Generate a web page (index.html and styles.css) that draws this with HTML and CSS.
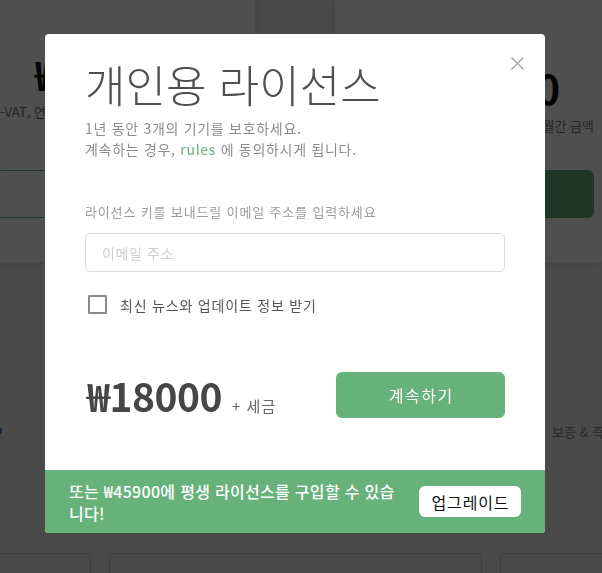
FILE: index.html
```html
<!DOCTYPE html>
<html lang="ko">
<head>
<meta charset="utf-8">
<title>개인용 라이선스</title>
<link rel="stylesheet" href="styles.css">
</head>
<body>
<div class="page">
  <section class="plans">
    <div class="plan plan-left">
      <div class="plan-price">₩18000</div>
      <div class="plan-note">-VAT, 연간 결제</div>
      <div class="plan-btn plan-btn-outline">선택하기</div>
    </div>
    <div class="plan plan-right">
      <div class="plan-price">₩2500</div>
      <div class="plan-note">VAT 별도, 월간 금액</div>
      <div class="plan-btn plan-btn-fill">선택하기</div>
    </div>
  </section>
  <section class="features">
    <div class="feature-row">
      <span class="feature-dot"></span>
      <span class="feature-text">보증 &amp; 즉시 지원</span>
    </div>
    <div class="cards">
      <div class="card card-a"></div>
      <div class="card card-b"></div>
      <div class="card card-c"></div>
    </div>
  </section>
</div>

<div class="overlay">
  <div class="modal">
    <div class="modal-body">
      <button class="close" aria-label="닫기">
        <svg width="13" height="13" viewBox="0 0 13 13"><path d="M0.5 0.5L12.5 12.5M12.5 0.5L0.5 12.5" stroke="#9a9a9a" stroke-width="1.1" fill="none"/></svg>
      </button>
      <h1 class="title">개인용 라이선스</h1>
      <p class="subtitle">1년 동안 3개의 기기를 보호하세요.<br>계속하는 경우, <a class="rules">rules</a> 에 동의하시게 됩니다.</p>
      <div class="label">라이선스 키를 보내드릴 이메일 주소를 입력하세요</div>
      <div class="input">이메일 주소</div>
      <label class="check-row">
        <span class="check-box"></span>
        <span class="check-label">최신 뉴스와 업데이트 정보 받기</span>
      </label>
      <div class="price-row">
        <div class="price"><span class="price-num">₩18000</span><span class="price-tax">+ 세금</span></div>
        <div class="continue">계속하기</div>
      </div>
    </div>
    <div class="modal-foot">
      <div class="foot-text">또는 ₩45900에 평생 라이선스를 구입할 수 있습니다!</div>
      <div class="upgrade">업그레이드</div>
    </div>
  </div>
</div>
</body>
</html>
```

FILE: styles.css
```css
html, body {
  margin: 0;
  padding: 0;
}
body {
  width: 602px;
  height: 573px;
  overflow: hidden;
  font-family: "Noto Sans CJK KR", "Noto Sans", sans-serif;
  background: #efefef;
}
.page {
  width: 602px;
  height: 573px;
  overflow: hidden;
  background: #efefef;
}

/* background plans */
.plans {
  display: flex;
  gap: 80px;
  margin-left: -12px;
  height: 262px;
}
.plan {
  flex: 0 0 267px;
  box-sizing: border-box;
  background: #fff;
  box-shadow: 0 0 10px rgba(0, 0, 0, 0.12);
  padding: 0 8px;
  display: flex;
  flex-direction: column;
}
.plan-price {
  font-size: 40px;
  font-weight: 700;
  line-height: 48px;
  color: #111;
  white-space: nowrap;
}
.plan-note {
  font-size: 13px;
  line-height: 18px;
  color: #777;
  white-space: nowrap;
  margin-top: 5px;
}
.plan-btn {
  box-sizing: border-box;
  height: 48px;
  border-radius: 6px;
  font-size: 15px;
  display: flex;
  align-items: center;
  justify-content: center;
}
.plan-left {
  padding-top: 50px;
  align-items: flex-start;
}
.plan-left .plan-price {
  margin-left: 39px;
}
.plan-left .plan-note {
  margin-left: 4px;
}
.plan-left .plan-btn {
  margin-top: 49px;
  align-self: stretch;
}
.plan-btn-outline {
  border: 1px solid #66b27a;
  color: #66b27a;
}
.plan-right {
  padding-top: 64px;
  align-items: flex-end;
}
.plan-right .plan-price {
  margin-right: 34px;
}
.plan-right .plan-btn {
  margin-top: 35px;
  align-self: stretch;
}
.plan-btn-fill {
  background: #66b27a;
  color: #fff;
}

.features {
  padding-top: 160px;
}
.feature-row {
  display: flex;
  justify-content: space-between;
  align-items: center;
  height: 18px;
}
.feature-dot {
  width: 8px;
  height: 8px;
  border-radius: 50%;
  background: #2f7fd0;
  margin-left: -6px;
}
.feature-text {
  font-size: 13px;
  color: #888;
  white-space: nowrap;
  width: 50px;
  overflow: visible;
}
.cards {
  display: flex;
  gap: 18px;
  margin-top: 113px;
  margin-left: -40px;
}
.card {
  height: 100px;
  border: 1px solid #cbcbcb;
  border-radius: 5px;
  box-sizing: border-box;
}
.card-a { flex: 0 0 131px; }
.card-b { flex: 0 0 373px; }
.card-c { flex: 0 0 200px; }

/* overlay + modal */
.overlay {
  position: fixed;
  inset: 0;
  background: rgba(0, 0, 0, 0.69);
}
.modal {
  width: 500px;
  margin: 34px 0 0 45px;
  border-radius: 4px;
  overflow: hidden;
  background: #fff;
}
.modal-body {
  position: relative;
  height: 436px;
  box-sizing: border-box;
  padding: 23px 40px 0;
}
.close {
  position: absolute;
  top: 23px;
  right: 21px;
  width: 13px;
  height: 13px;
  padding: 0;
  border: 0;
  background: none;
  display: block;
}
.close svg {
  display: block;
}
.title {
  margin: 0;
  font-size: 44px;
  font-weight: 300;
  line-height: 55px;
  color: #4f4f4f;
  white-space: nowrap;
}
.subtitle {
  margin: 6px 0 0;
  font-size: 14px;
  line-height: 21px;
  letter-spacing: 0.7px;
  color: #8d8d8d;
}
.rules {
  color: #66b27a;
}
.label {
  margin-top: 43px;
  font-size: 13px;
  line-height: 18px;
  letter-spacing: 0.85px;
  color: #9a9a9a;
}
.input {
  margin-top: 12px;
  box-sizing: border-box;
  height: 39px;
  border: 1px solid #dcdcdc;
  border-radius: 5px;
  padding-left: 16px;
  display: flex;
  align-items: center;
  font-size: 14px;
  letter-spacing: 0.6px;
  color: #cfcfcf;
}
.check-row {
  margin-top: 23px;
  display: flex;
  align-items: center;
  height: 19px;
}
.check-box {
  box-sizing: border-box;
  width: 19px;
  height: 19px;
  border: 2px solid #8a8a8a;
  border-radius: 1px;
  margin-left: 3px;
}
.check-label {
  margin-left: 13px;
  font-size: 14px;
  letter-spacing: 0.8px;
  color: #555;
}
.price-row {
  margin-top: 53px;
  display: flex;
  justify-content: space-between;
  align-items: center;
}
.price {
  display: flex;
  align-items: baseline;
  margin-left: 2px;
}
.price-num {
  font-size: 39px;
  font-weight: 700;
  color: #464646;
  letter-spacing: -0.5px;
}
.price-tax {
  margin-left: 10px;
  font-size: 15px;
  letter-spacing: 1px;
  color: #666;
}
.continue {
  width: 169px;
  height: 46px;
  border-radius: 6px;
  background: #66b27a;
  color: #fff;
  font-size: 16px;
  letter-spacing: 1.5px;
  text-indent: 1.5px;
  display: flex;
  align-items: center;
  justify-content: center;
}
.modal-foot {
  height: 63px;
  background: #66b27a;
  box-sizing: border-box;
  padding: 0 24px;
  display: flex;
  align-items: center;
}
.foot-text {
  flex: 1;
  margin-right: 12px;
  font-size: 16px;
  line-height: 22px;
  letter-spacing: 0.3px;
  font-weight: 500;
  color: #fff;
}
.upgrade {
  flex: 0 0 102px;
  height: 31px;
  border-radius: 6px;
  background: #fff;
  color: #111;
  font-size: 16px;
  letter-spacing: 0.8px;
  text-indent: 0.8px;
  display: flex;
  align-items: center;
  justify-content: center;
}
```
